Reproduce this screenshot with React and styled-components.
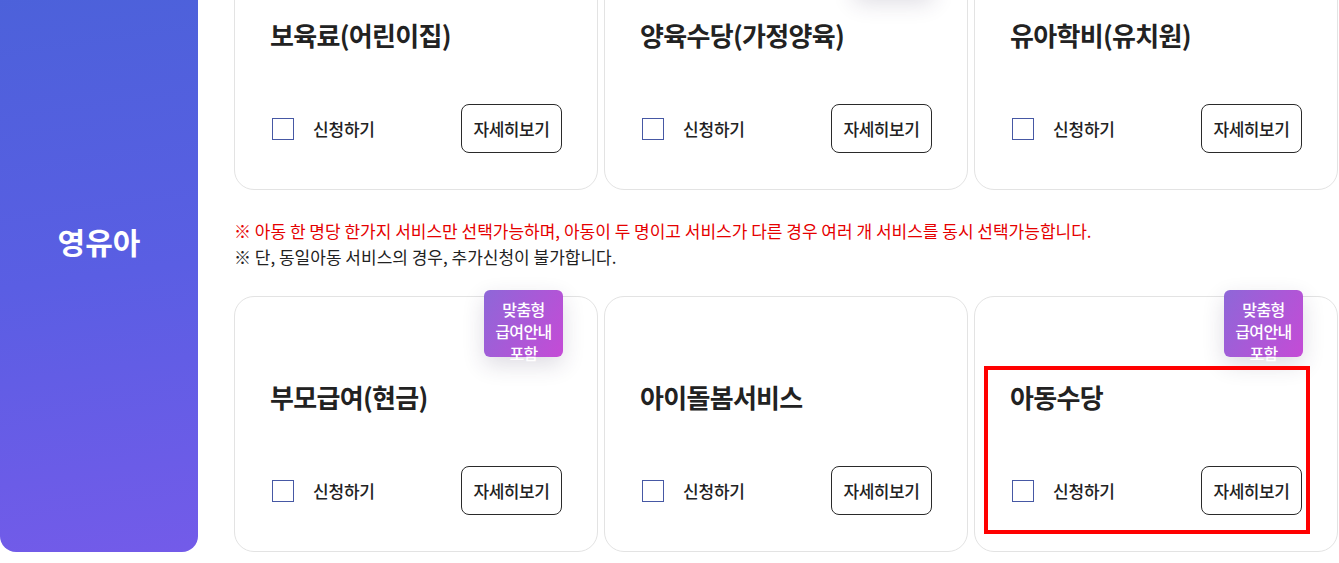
import React from "react";
import styled, { createGlobalStyle } from "styled-components";

const Global = createGlobalStyle`
  html, body { margin: 0; padding: 0; background: #fff; }
  body { font-family: "Noto Sans CJK KR", "Noto Sans", sans-serif; color: #222; overflow: hidden; }
  * { box-sizing: border-box; }
`;

const Section = styled.section`
  display: flex;
  gap: 36px;
  margin-top: -66px;
  width: 1339px;
`;

const SidePanel = styled.div`
  width: 198px;
  flex: 0 0 198px;
  border-radius: 16px;
  background: linear-gradient(172deg, #4962d8 0%, #5a5ee3 55%, #735be9 100%);
  display: flex;
  align-items: center;
  justify-content: center;
`;

const SideTitle = styled.h2`
  margin: 0 0 4px;
  color: #fff;
  font-size: 30px;
  font-weight: 700;
  letter-spacing: 0;
`;

const Content = styled.div`
  width: 1104px;
  display: flex;
  flex-direction: column;
`;

const CardGrid = styled.div`
  display: grid;
  grid-template-columns: repeat(3, 364px);
  gap: 6px;
`;

const Card = styled.div`
  position: relative;
  height: 256px;
  border: 1px solid #e3e3e3;
  border-radius: 20px;
  background: #fff;
  padding: 82px 35px 36px 35px;
  display: flex;
  flex-direction: column;
  justify-content: space-between;
`;

const CardTitle = styled.h3`
  margin: 0;
  font-size: 26px;
  line-height: 36px;
  font-weight: 700;
  color: #222;
  letter-spacing: -0.7px;
`;

const CardFooter = styled.div`
  display: flex;
  align-items: center;
  justify-content: space-between;
`;

const CheckLabel = styled.label`
  display: flex;
  align-items: center;
  gap: 19px;
  padding-left: 2px;
  font-size: 17px;
  font-weight: 500;
  color: #222;
  letter-spacing: -0.2px;
`;

const CheckBox = styled.span`
  width: 22px;
  height: 22px;
  border: 1.5px solid #4658a4;
  background: #fff;
  display: inline-block;
`;

const DetailButton = styled.button`
  width: 101px;
  height: 49px;
  border: 1px solid #2a2a2a;
  border-radius: 8px;
  background: #fff;
  font-family: inherit;
  font-size: 17px;
  font-weight: 500;
  color: #222;
  letter-spacing: -0.4px;
  padding: 0;
`;

const Badge = styled.div`
  position: absolute;
  top: -7px;
  right: 34px;
  width: 79px;
  height: 67px;
  padding-top: 8px;
  border-radius: 6px;
  background: linear-gradient(120deg, #8e67d8 0%, #c54bd6 100%);
  box-shadow: 0 8px 22px rgba(50, 40, 80, 0.16);
  color: #fff;
  font-size: 16px;
  line-height: 22px;
  font-weight: 500;
  text-align: center;
  letter-spacing: -0.6px;
  white-space: pre-line;
`;

const Highlight = styled.div`
  position: absolute;
  left: 9px;
  top: 69px;
  right: 27px;
  bottom: 17px;
  border: 4px solid #f00;
  pointer-events: none;
`;

const Notice = styled.div`
  margin: 28px 0 26px;
  font-size: 17px;
  line-height: 26px;
  letter-spacing: 0;
`;

const NoticeLine = styled.p`
  margin: 0;
  color: ${(p) => (p.$alert ? "#e50000" : "#222")};
`;

const topRow = [
  { title: "보육료(어린이집)" },
  { title: "양육수당(가정양육)", badge: true },
  { title: "유아학비(유치원)" },
];

const bottomRow = [
  { title: "부모급여(현금)", badge: true },
  { title: "아이돌봄서비스" },
  { title: "아동수당", badge: true, highlight: true },
];

function ServiceCard({ title, badge, highlight }) {
  return (
    <Card>
      {badge && <Badge>{"맞춤형\n급여안내\n포함"}</Badge>}
      <CardTitle>{title}</CardTitle>
      <CardFooter>
        <CheckLabel>
          <CheckBox />
          신청하기
        </CheckLabel>
        <DetailButton>자세히보기</DetailButton>
      </CardFooter>
      {highlight && <Highlight />}
    </Card>
  );
}

export default function App() {
  return (
    <>
      <Global />
      <Section>
        <SidePanel>
          <SideTitle>영유아</SideTitle>
        </SidePanel>
        <Content>
          <CardGrid>
            {topRow.map((c) => (
              <ServiceCard key={c.title} {...c} />
            ))}
          </CardGrid>
          <Notice>
            <NoticeLine $alert>
              ※ 아동 한 명당 한가지 서비스만 선택가능하며, 아동이 두 명이고 서비스가 다른 경우 여러 개 서비스를 동시 선택가능합니다.
            </NoticeLine>
            <NoticeLine>※ 단, 동일아동 서비스의 경우, 추가신청이 불가합니다.</NoticeLine>
          </Notice>
          <CardGrid>
            {bottomRow.map((c) => (
              <ServiceCard key={c.title} {...c} />
            ))}
          </CardGrid>
        </Content>
      </Section>
    </>
  );
}
